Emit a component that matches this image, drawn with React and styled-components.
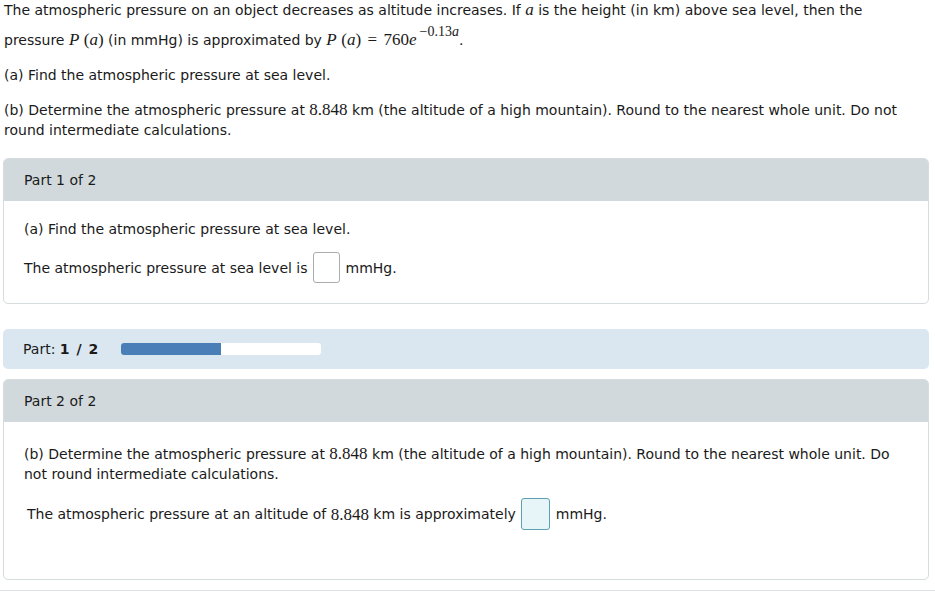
import React from "react";
import styled, { createGlobalStyle } from "styled-components";

const GlobalStyle = createGlobalStyle`
  body {
    margin: 0;
    background: #fff;
    font-family: "DejaVu Sans", Verdana, sans-serif;
    font-size: 14px;
    color: #1a1a1a;
  }
`;

const Page = styled.div`
  padding: 0 6px 0 3px;
`;

const Intro = styled.div`
  padding: 0 0 0 1px;
  line-height: 20px;
`;

const Para = styled.p`
  margin: ${({ $mt }) => $mt || "0"} 0 0;
`;

const Math = styled.span`
  font-family: "Liberation Serif", "Times New Roman", serif;
  font-size: 17px;
  line-height: 1;
  padding: 0 ${({ $pad }) => $pad || "0"};
  font-style: ${({ $italic }) => ($italic ? "italic" : "normal")};
`;

const Sup = styled.sup`
  font-family: "Liberation Serif", "Times New Roman", serif;
  font-size: 14px;
  position: relative;
  top: -3px;
  margin-left: 3px;
  vertical-align: super;
  line-height: 0;
`;

const Panel = styled.section`
  margin-top: ${({ $mt }) => $mt || "0"};
  border: 1px solid #d6dbde;
  border-radius: 5px;
  overflow: hidden;
  background: #fff;
`;

const PanelHead = styled.div`
  background: #d1d9dd;
  height: 42px;
  display: flex;
  align-items: center;
  padding-left: 20px;
`;

const PanelBody = styled.div`
  padding: ${({ $pad }) => $pad};
  min-height: ${({ $minH }) => $minH || "auto"};
  box-sizing: border-box;
`;

const Line = styled.div`
  display: flex;
  align-items: center;
  flex-wrap: wrap;
  line-height: 20px;
  margin-top: ${({ $mt }) => $mt || "0"};
  padding-left: ${({ $indent }) => $indent || "0"};
`;

const Answer = styled.span`
  display: inline-block;
  box-sizing: border-box;
  width: ${({ $w }) => $w}px;
  height: ${({ $h }) => $h}px;
  margin: 0 6px 0 5px;
  border-radius: 3px;
  border: 1px solid ${({ $active }) => ($active ? "#5aa0b0" : "#a9adb0")};
  background: ${({ $active }) => ($active ? "#e7f4f8" : "#fff")};
`;

const Progress = styled.div`
  margin-top: 25px;
  height: 40px;
  background: #dae6f0;
  border-radius: 5px;
  display: flex;
  align-items: center;
  padding-left: 20px;
`;

const Count = styled.b`
  letter-spacing: 1px;
`;

const Track = styled.div`
  width: 200px;
  height: 12px;
  margin-left: 22px;
  background: #fff;
  border-radius: 3px;
  overflow: hidden;
`;

const Fill = styled.div`
  height: 100%;
  background: #4a7eb6;
`;

const Bottom = styled.div`
  margin: 10px -6px 0 -3px;
  border-top: 1px solid #dde3e6;
  height: 8px;
`;

export default function App() {
  const done = 1;
  const total = 2;
  return (
    <>
      <GlobalStyle />
      <Page>
        <Intro>
          <Para>
            The atmospheric pressure on an object decreases as altitude increases. If{" "}
            <Math $italic>a</Math> is the height (in km) above sea level, then the
          </Para>
          <Para $mt="10px">
            pressure <Math $italic>P</Math> <Math>(</Math><Math $italic>a</Math><Math>)</Math> (in mmHg) is
            approximated by <Math $italic>P</Math> <Math>(</Math><Math $italic>a</Math>
            <Math>)</Math> <Math $pad="2px">=</Math> <Math>760</Math>
            <Math $italic>e</Math>
            <Sup>
              −0.13<i>a</i>
            </Sup>
            .
          </Para>
          <Para $mt="15px">(a) Find the atmospheric pressure at sea level.</Para>
          <Para $mt="15px">
            (b) Determine the atmospheric pressure at <Math>8.848</Math> km (the altitude of a high
            mountain). Round to the nearest whole unit. Do not round intermediate calculations.
          </Para>
        </Intro>

        <Panel $mt="18px">
          <PanelHead>Part 1 of 2</PanelHead>
          <PanelBody $pad="18px 20px 20px">
            <Line>(a) Find the atmospheric pressure at sea level.</Line>
            <Line $mt="13px">
              The atmospheric pressure at sea level is
              <Answer $w={27} $h={31} />
              mmHg.
            </Line>
          </PanelBody>
        </Panel>

        <Progress>
          <span>
            Part: <Count>1 / 2</Count>
          </span>
          <Track>
            <Fill style={{ width: `${(done / total) * 100}%` }} />
          </Track>
        </Progress>

        <Panel $mt="10px">
          <PanelHead>Part 2 of 2</PanelHead>
          <PanelBody $pad="22px 20px 0" $minH="157px">
            <Line>
              <span>
                (b) Determine the atmospheric pressure at <Math>8.848</Math> km (the altitude of a high
                mountain). Round to the nearest whole unit. Do not round intermediate calculations.
              </span>
            </Line>
            <Line $mt="14px" $indent="3px">
              The atmospheric pressure at an altitude of&nbsp;<Math>8.848</Math>&nbsp;km is approximately
              <Answer $w={29} $h={32} $active />
              mmHg.
            </Line>
          </PanelBody>
        </Panel>
        <Bottom />
      </Page>
    </>
  );
}
